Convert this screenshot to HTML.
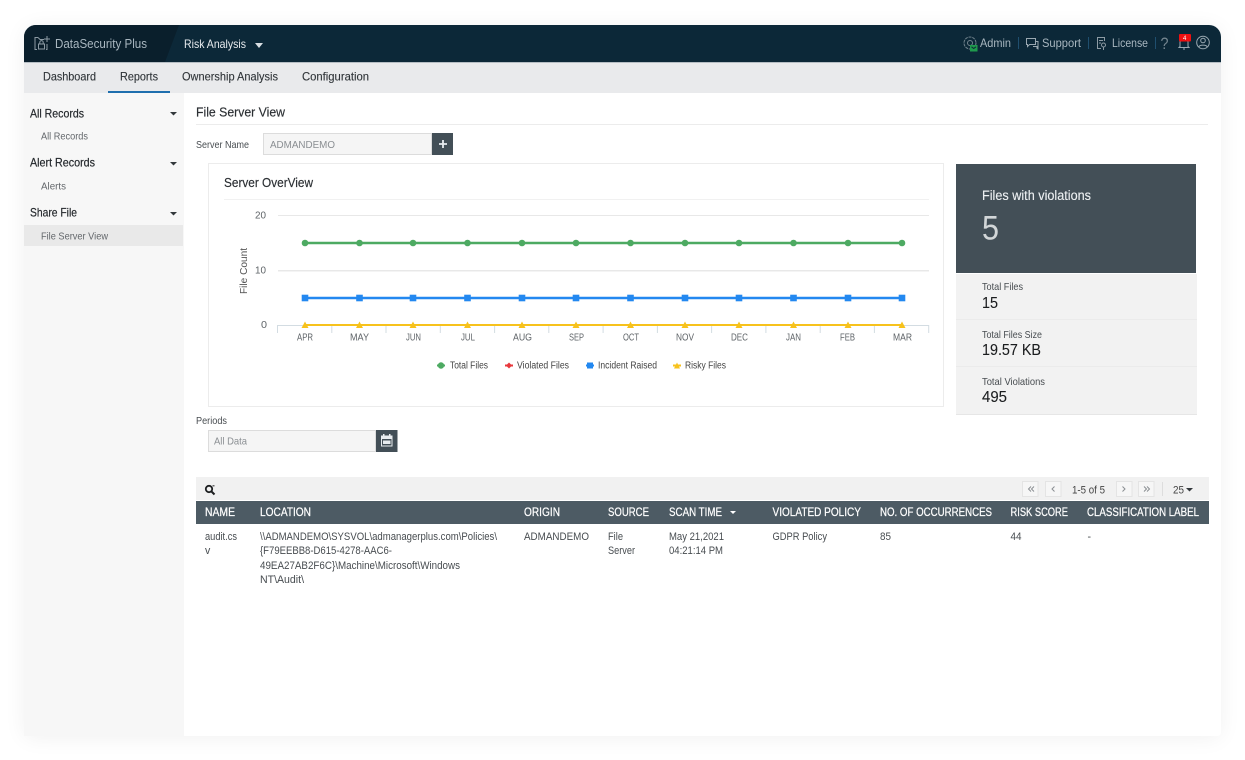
<!DOCTYPE html>
<html lang="en">
<head>
<meta charset="utf-8">
<title>DataSecurity Plus</title>
<style>
html,body{margin:0;padding:0;background:#fff;width:1245px;height:760px;overflow:hidden}
#card{position:absolute;left:24px;top:25px;width:1197px;height:711px;border-radius:12px 12px 4px 4px;box-shadow:0 2px 22px rgba(0,0,0,.06);background:#fff}
svg{position:absolute;left:0;top:0}
text{font-family:"Liberation Sans",sans-serif;font-size:11px;fill:#4a4f54}
.h{fill:#a9b7c0;font-size:12px}
.n{fill:#2f3438;font-size:12px;stroke:#2f3438;stroke-width:.12}
.sb{fill:#24282c;font-size:12px;stroke:#24282c;stroke-width:.2}
.ss{fill:#63676b;font-size:10.3px}
.t{fill:#2b2f33;font-size:13px;stroke:#2b2f33;stroke-width:.15}
.th{fill:#fff;font-size:11.5px;stroke:#fff;stroke-width:.22}
.td{fill:#474c50;font-size:10.6px}
.ax{fill:#5f6468;font-size:10px}
.lb{fill:#444;font-size:10px}
.big{fill:#1b1d1f;font-size:15.5px;stroke:#1b1d1f;stroke-width:.1}
.sl{fill:#474c50;font-size:10.4px}
</style>
</head>
<body>
<div id="card"></div>
<svg width="1245" height="760" viewBox="0 0 1245 760" xmlns="http://www.w3.org/2000/svg">
<defs>
<clipPath id="hc"><path d="M24 62V37a12 12 0 0 1 12-12H1209a12 12 0 0 1 12 12V62Z"/></clipPath>
</defs>
<!-- header -->
<g clip-path="url(#hc)">
<rect x="24" y="25" width="1197" height="37" fill="#0c2838"/>
<path d="M24 25H179L165 62H24Z" fill="#0a1f2c"/>
</g>
<rect x="24" y="62" width="1197" height="1" fill="#b6bec4"/>
<!-- nav -->
<rect x="24" y="63" width="1197" height="30" fill="#e9eaec"/>
<rect x="108" y="91" width="62" height="2" fill="#1f6fae"/>
<!-- sidebar -->
<rect x="24" y="93" width="160" height="643" fill="#f7f7f7"/>
<rect x="24" y="225" width="159" height="21" fill="#e9e9e9"/>

<!-- logo -->
<g fill="none" stroke="#8d9ba4" stroke-width="1">
<path d="M38 37.500H35V49.500H37"/>
<path d="M38 37.500L40 39.500H44"/>
<rect x="38.500" y="44" width="6" height="5" />
<path d="M39.800 44V42.300a1.700 1.700 0 0 1 3.400 0V44"/>
<path d="M47 36V42M44 39H50"/>
<path d="M47 44V49.500H46"/>
</g>
<text x="55" y="48" class="h" style="font-size:12.800px" textLength="92" lengthAdjust="spacingAndGlyphs">DataSecurity Plus</text>
<text x="184" y="48" style="fill:#e8ecef;font-size:12px" textLength="62" lengthAdjust="spacingAndGlyphs">Risk Analysis</text>
<polygon points="255,43 263,43 259,48" fill="#d8dee2"/>

<!-- header right -->
<g fill="none" stroke="#74858f" stroke-width="1">
<circle cx="970" cy="43" r="6" stroke-dasharray="3 .8"/>
<circle cx="970" cy="43" r="2.500"/>
</g>
<rect x="970" y="45" width="7.500" height="6.500" fill="#1f9a4d"/>
<path d="M971.500 46.800L973.700 48.500L976 46.800" stroke="#0c2838" fill="none" stroke-width="1"/>
<text x="980" y="47" class="h" textLength="31" lengthAdjust="spacingAndGlyphs">Admin</text>
<rect x="1018" y="37" width="1" height="12" fill="#1f4f6f"/>
<g fill="none" stroke="#9aa8b1" stroke-width="1">
<path d="M1026.500 38.500H1035.500V44.500H1029.500L1027.500 46.500V44.500H1026.500Z"/>
<path d="M1033 46.500H1037V48.500L1038 49V41.500H1036"/>
</g>
<text x="1042" y="47" class="h" textLength="39" lengthAdjust="spacingAndGlyphs">Support</text>
<rect x="1088" y="37" width="1" height="12" fill="#1f4f6f"/>
<g fill="none" stroke="#8d9ba4" stroke-width="1">
<path d="M1104.500 41V37.500H1097.500V48.500H1101"/>
<circle cx="1103.500" cy="45" r="2"/>
<path d="M1103.500 47V50M1099 40.500H1103M1099 43H1101"/>
</g>
<text x="1112" y="47" class="h" textLength="36" lengthAdjust="spacingAndGlyphs">License</text>
<rect x="1155" y="37" width="1" height="12" fill="#1f4f6f"/>
<text x="1160.500" y="49" style="fill:#74858f;font-size:17px" textLength="8" lengthAdjust="spacingAndGlyphs">?</text>
<g fill="none" stroke="#9aa8b1" stroke-width="1">
<path d="M1180 46.500V42a4 4 0 0 1 8 0V46.500L1189 47.500H1179Z"/>
<path d="M1183 49H1185"/>
</g>
<rect x="1179" y="34" width="12" height="7.500" rx="1" fill="#f01010"/>
<text x="1183" y="40" style="fill:#fff;font-size:6px">4</text>
<g fill="none" stroke="#9aa8b1" stroke-width="1">
<circle cx="1203" cy="42.500" r="6.300"/>
<circle cx="1203" cy="40.500" r="2.300"/>
<path d="M1198.800 47C1199.500 44.500 1206.500 44.500 1207.200 47"/>
</g>

<!-- nav text -->
<text x="43" y="80.500" class="n" textLength="53" lengthAdjust="spacingAndGlyphs">Dashboard</text>
<text x="120" y="80.500" class="n" textLength="38" lengthAdjust="spacingAndGlyphs">Reports</text>
<text x="182" y="80.500" class="n" textLength="96" lengthAdjust="spacingAndGlyphs">Ownership Analysis</text>
<text x="302" y="80.500" class="n" textLength="67" lengthAdjust="spacingAndGlyphs">Configuration</text>

<!-- sidebar text -->
<text x="30" y="117.500" class="sb" textLength="54" lengthAdjust="spacingAndGlyphs">All Records</text>
<polygon points="170,112 177,112 173.500,115.500" fill="#33383c"/>
<text x="41" y="139.500" class="ss" textLength="47" lengthAdjust="spacingAndGlyphs">All Records</text>
<text x="30" y="166.500" class="sb" textLength="65" lengthAdjust="spacingAndGlyphs">Alert Records</text>
<polygon points="170,162 177,162 173.500,165.500" fill="#33383c"/>
<text x="41" y="189.500" class="ss" textLength="25" lengthAdjust="spacingAndGlyphs">Alerts</text>
<text x="30" y="216.500" class="sb" textLength="47" lengthAdjust="spacingAndGlyphs">Share File</text>
<polygon points="170,212 177,212 173.500,215.500" fill="#33383c"/>
<text x="41" y="239.500" class="ss" textLength="67" lengthAdjust="spacingAndGlyphs">File Server View</text>

<!-- page title -->
<text x="196" y="116.500" class="t" textLength="89" lengthAdjust="spacingAndGlyphs">File Server View</text>
<rect x="196" y="124" width="1012" height="1" fill="#ececec"/>
<text x="196" y="148" class="ss" style="fill:#474c50" textLength="53" lengthAdjust="spacingAndGlyphs">Server Name</text>
<rect x="263.500" y="133.500" width="168" height="21" fill="#f5f5f5" stroke="#dcdcdc"/>
<text x="270" y="148" class="ss" style="fill:#8a8e92" textLength="65" lengthAdjust="spacingAndGlyphs">ADMANDEMO</text>
<rect x="432" y="133" width="21" height="22" fill="#434f57"/>
<path d="M443 140V148M439 144H447" stroke="#e8ecef" stroke-width="1.800"/>

<!-- chart card -->
<rect x="208.500" y="163.500" width="735" height="243" fill="#fff" stroke="#ececec"/>
<text x="224" y="187" class="t" style="font-size:12.500px" textLength="89" lengthAdjust="spacingAndGlyphs">Server OverView</text>
<rect x="224" y="199" width="705" height="1" fill="#f1f1f1"/>
<text x="255" y="218.500" class="ax" textLength="11" lengthAdjust="spacingAndGlyphs">20</text>
<text x="255" y="273.500" class="ax" textLength="11" lengthAdjust="spacingAndGlyphs">10</text>
<text x="261" y="328" class="ax" textLength="6" lengthAdjust="spacingAndGlyphs">0</text>
<text transform="translate(247,294) rotate(-90)" x="0" y="0" style="fill:#555;font-size:10.500px" textLength="46" lengthAdjust="spacingAndGlyphs">File Count</text>
<rect x="278" y="215" width="651" height="1" fill="#e8e8e8"/>
<rect x="278" y="270" width="651" height="1.500" fill="#e8e8e8"/>
<path d="M277.500 325.500H929M277.500 325V333M331.800 325V333M386 325V333M440.300 325V333M494.600 325V333M548.800 325V333M603.100 325V333M657.400 325V333M711.600 325V333M765.900 325V333M820.200 325V333M874.400 325V333M928.700 325V333" stroke="#d3dce2" stroke-width="1" fill="none"/>
<!-- series -->
<path d="M305 243H902" stroke="#4daa62" stroke-width="2.400"/>
<g fill="#4daa62">
<circle cx="305" cy="243" r="3.300"/><circle cx="359.500" cy="243" r="3.300"/><circle cx="413" cy="243" r="3.300"/><circle cx="467.500" cy="243" r="3.300"/><circle cx="522" cy="243" r="3.300"/><circle cx="576" cy="243" r="3.300"/><circle cx="630.500" cy="243" r="3.300"/><circle cx="685" cy="243" r="3.300"/><circle cx="739" cy="243" r="3.300"/><circle cx="793.500" cy="243" r="3.300"/><circle cx="848" cy="243" r="3.300"/><circle cx="902" cy="243" r="3.300"/>
</g>
<path d="M305 298H902" stroke="#2388f0" stroke-width="2.400"/>
<g fill="#2388f0">
<rect x="301.700" y="294.700" width="6.600" height="6.600"/><rect x="356.200" y="294.700" width="6.600" height="6.600"/><rect x="409.700" y="294.700" width="6.600" height="6.600"/><rect x="464.200" y="294.700" width="6.600" height="6.600"/><rect x="518.700" y="294.700" width="6.600" height="6.600"/><rect x="572.700" y="294.700" width="6.600" height="6.600"/><rect x="627.200" y="294.700" width="6.600" height="6.600"/><rect x="681.700" y="294.700" width="6.600" height="6.600"/><rect x="735.700" y="294.700" width="6.600" height="6.600"/><rect x="790.200" y="294.700" width="6.600" height="6.600"/><rect x="844.700" y="294.700" width="6.600" height="6.600"/><rect x="898.700" y="294.700" width="6.600" height="6.600"/>
</g>
<path d="M305 325H902" stroke="#f7c21c" stroke-width="2"/>
<g fill="#f7c21c">
<polygon points="305,321.500 308.500,328 301.500,328"/><polygon points="359.500,321.500 363,328 356,328"/><polygon points="413,321.500 416.500,328 409.500,328"/><polygon points="467.500,321.500 471,328 464,328"/><polygon points="522,321.500 525.500,328 518.500,328"/><polygon points="576,321.500 579.500,328 572.500,328"/><polygon points="630.500,321.500 634,328 627,328"/><polygon points="685,321.500 688.500,328 681.500,328"/><polygon points="739,321.500 742.500,328 735.500,328"/><polygon points="793.500,321.500 797,328 790,328"/><polygon points="848,321.500 851.500,328 844.500,328"/><polygon points="902,321.500 905.500,328 898.500,328"/>
</g>
<!-- months -->
<text x="297" y="340.500" class="ax" textLength="16" lengthAdjust="spacingAndGlyphs">APR</text>
<text x="350" y="340.500" class="ax" textLength="19" lengthAdjust="spacingAndGlyphs">MAY</text>
<text x="406" y="340.500" class="ax" textLength="15" lengthAdjust="spacingAndGlyphs">JUN</text>
<text x="461" y="340.500" class="ax" textLength="14" lengthAdjust="spacingAndGlyphs">JUL</text>
<text x="513" y="340.500" class="ax" textLength="19" lengthAdjust="spacingAndGlyphs">AUG</text>
<text x="569" y="340.500" class="ax" textLength="15" lengthAdjust="spacingAndGlyphs">SEP</text>
<text x="623" y="340.500" class="ax" textLength="16" lengthAdjust="spacingAndGlyphs">OCT</text>
<text x="676" y="340.500" class="ax" textLength="18" lengthAdjust="spacingAndGlyphs">NOV</text>
<text x="731" y="340.500" class="ax" textLength="17" lengthAdjust="spacingAndGlyphs">DEC</text>
<text x="786" y="340.500" class="ax" textLength="15" lengthAdjust="spacingAndGlyphs">JAN</text>
<text x="840" y="340.500" class="ax" textLength="15" lengthAdjust="spacingAndGlyphs">FEB</text>
<text x="893" y="340.500" class="ax" textLength="19" lengthAdjust="spacingAndGlyphs">MAR</text>
<!-- legend -->
<path d="M437 365.500H445" stroke="#4daa62" stroke-width="2"/><circle cx="441" cy="365.500" r="3.200" fill="#4daa62"/>
<text x="450" y="368.500" class="lb" textLength="38" lengthAdjust="spacingAndGlyphs">Total Files</text>
<path d="M505 365.500H513" stroke="#e8383d" stroke-width="2"/><polygon points="509,362.500 512,365.500 509,368.500 506,365.500" fill="#e8383d"/>
<text x="517" y="368.500" class="lb" textLength="52" lengthAdjust="spacingAndGlyphs">Violated Files</text>
<path d="M586 365.500H594" stroke="#2388f0" stroke-width="2"/><rect x="587" y="362.500" width="6" height="6" fill="#2388f0"/>
<text x="598" y="368.500" class="lb" textLength="59" lengthAdjust="spacingAndGlyphs">Incident Raised</text>
<path d="M673 365.500H681" stroke="#f7c21c" stroke-width="2"/><polygon points="677,362.500 680,368.500 674,368.500" fill="#f7c21c"/>
<text x="685" y="368.500" class="lb" textLength="41" lengthAdjust="spacingAndGlyphs">Risky Files</text>

<!-- side panel -->
<rect x="956" y="164" width="240" height="109" fill="#434f57"/>
<rect x="956" y="274" width="241" height="140" fill="#f2f2f2"/>
<rect x="956" y="319" width="241" height="1" fill="#ebebeb"/>
<rect x="956" y="366" width="241" height="1" fill="#ebebeb"/>
<rect x="956" y="414" width="241" height="1" fill="#e6e6e6"/>
<text x="982" y="200" style="fill:#eef1f3;font-size:13.500px;stroke:#eef1f3;stroke-width:.12" textLength="109" lengthAdjust="spacingAndGlyphs">Files with violations</text>
<text x="982" y="239.500" style="fill:#f2f4f5;font-size:34px;opacity:.82" textLength="17" lengthAdjust="spacingAndGlyphs">5</text>
<text x="982" y="290" class="sl" textLength="41" lengthAdjust="spacingAndGlyphs">Total Files</text>
<text x="982" y="308" class="big" textLength="16" lengthAdjust="spacingAndGlyphs">15</text>
<text x="982" y="338" class="sl" textLength="60" lengthAdjust="spacingAndGlyphs">Total Files Size</text>
<text x="982" y="355" class="big" textLength="59" lengthAdjust="spacingAndGlyphs">19.57 KB</text>
<text x="982" y="385" class="sl" textLength="63" lengthAdjust="spacingAndGlyphs">Total Violations</text>
<text x="982" y="402" class="big" textLength="25" lengthAdjust="spacingAndGlyphs">495</text>

<!-- periods -->
<text x="196" y="424" class="ss" style="fill:#474c50" textLength="31" lengthAdjust="spacingAndGlyphs">Periods</text>
<rect x="208.500" y="430.500" width="167" height="21" fill="#f5f5f5" stroke="#dcdcdc"/>
<text x="214" y="444.500" class="ss" style="fill:#8a8e92" textLength="33" lengthAdjust="spacingAndGlyphs">All Data</text>
<rect x="376" y="430" width="21.500" height="22" fill="#434f57"/>
<g fill="#e8ecef">
<path d="M381 435.500H392.500V446.500H381ZM382 439V445.500H391.500V439Z" fill-rule="evenodd"/>
<rect x="383" y="434" width="1.500" height="3"/><rect x="389" y="434" width="1.500" height="3"/>
<rect x="383" y="440.500" width="7.500" height="3.500"/>
</g>

<!-- table toolbar -->
<rect x="196" y="477" width="1013" height="23" fill="#f1f1f1"/>
<g fill="none" stroke="#1d1f21">
<circle cx="209" cy="489" r="3.200" stroke-width="1.800"/>
<path d="M211.500 491.500L214.500 494.500" stroke-width="2"/>
</g>
<rect x="212.500" y="485" width="2" height="1.500" fill="#666"/>
<g fill="#f6f6f6" stroke="#e4e4e4">
<rect x="1022.500" y="481.500" width="15.500" height="15"/>
<rect x="1045.500" y="481.500" width="15.500" height="15"/>
<rect x="1116.500" y="481.500" width="15.500" height="15"/>
<rect x="1138.500" y="481.500" width="15.500" height="15"/>
</g>
<g fill="none" stroke="#8a8e92" stroke-width="1">
<path d="M1031 486.500L1028.500 489L1031 491.500M1034 486.500L1031.500 489L1034 491.500"/>
<path d="M1054.500 486.500L1052 489L1054.500 491.500"/>
<path d="M1122.500 486.500L1125 489L1122.500 491.500"/>
<path d="M1144 486.500L1146.500 489L1144 491.500M1147 486.500L1149.500 489L1147 491.500"/>
</g>
<text x="1072" y="493.500" class="td" style="fill:#444" textLength="33" lengthAdjust="spacingAndGlyphs">1-5 of 5</text>
<rect x="1162" y="482" width="1" height="14" fill="#dddddd"/>
<text x="1173" y="493.500" class="td" style="fill:#444" textLength="11" lengthAdjust="spacingAndGlyphs">25</text>
<polygon points="1186,488 1193,488 1189.500,491.500" fill="#33383c"/>

<!-- table header -->
<rect x="196" y="501" width="1013" height="23" fill="#4d5b64"/>
<text x="205" y="516" class="th" textLength="30" lengthAdjust="spacingAndGlyphs">NAME</text>
<text x="260" y="516" class="th" textLength="51" lengthAdjust="spacingAndGlyphs">LOCATION</text>
<text x="524" y="516" class="th" textLength="36" lengthAdjust="spacingAndGlyphs">ORIGIN</text>
<text x="608" y="516" class="th" textLength="41" lengthAdjust="spacingAndGlyphs">SOURCE</text>
<text x="669" y="516" class="th" textLength="53" lengthAdjust="spacingAndGlyphs">SCAN TIME</text>
<polygon points="730,511 736,511 733,514" fill="#fff"/>
<text x="772.500" y="516" class="th" textLength="88.500" lengthAdjust="spacingAndGlyphs">VIOLATED POLICY</text>
<text x="880" y="516" class="th" textLength="112" lengthAdjust="spacingAndGlyphs">NO. OF OCCURRENCES</text>
<text x="1010.500" y="516" class="th" textLength="57.500" lengthAdjust="spacingAndGlyphs">RISK SCORE</text>
<text x="1087" y="516" class="th" textLength="112" lengthAdjust="spacingAndGlyphs">CLASSIFICATION LABEL</text>

<!-- table row -->
<text x="205" y="540" class="td" textLength="32" lengthAdjust="spacingAndGlyphs">audit.cs</text>
<text x="205" y="554" class="td">v</text>
<text x="260" y="540" class="td" textLength="237" lengthAdjust="spacingAndGlyphs">\\ADMANDEMO\SYSVOL\admanagerplus.com\Policies\</text>
<text x="260" y="554" class="td" textLength="132" lengthAdjust="spacingAndGlyphs">{F79EEBB8-D615-4278-AAC6-</text>
<text x="260" y="569" class="td" textLength="200" lengthAdjust="spacingAndGlyphs">49EA27AB2F6C}\Machine\Microsoft\Windows</text>
<text x="260" y="583" class="td" textLength="44" lengthAdjust="spacingAndGlyphs">NT\Audit\</text>
<text x="524" y="540" class="td" textLength="65" lengthAdjust="spacingAndGlyphs">ADMANDEMO</text>
<text x="608" y="540" class="td" textLength="15" lengthAdjust="spacingAndGlyphs">File</text>
<text x="608" y="554" class="td" textLength="27" lengthAdjust="spacingAndGlyphs">Server</text>
<text x="669" y="540" class="td" textLength="55" lengthAdjust="spacingAndGlyphs">May 21,2021</text>
<text x="669" y="554" class="td" textLength="54" lengthAdjust="spacingAndGlyphs">04:21:14 PM</text>
<text x="772.500" y="540" class="td" textLength="54.500" lengthAdjust="spacingAndGlyphs">GDPR Policy</text>
<text x="880" y="540" class="td" textLength="11" lengthAdjust="spacingAndGlyphs">85</text>
<text x="1010.500" y="540" class="td" textLength="11" lengthAdjust="spacingAndGlyphs">44</text>
<text x="1087.500" y="540" class="td">-</text>
</svg>
</body>
</html>
